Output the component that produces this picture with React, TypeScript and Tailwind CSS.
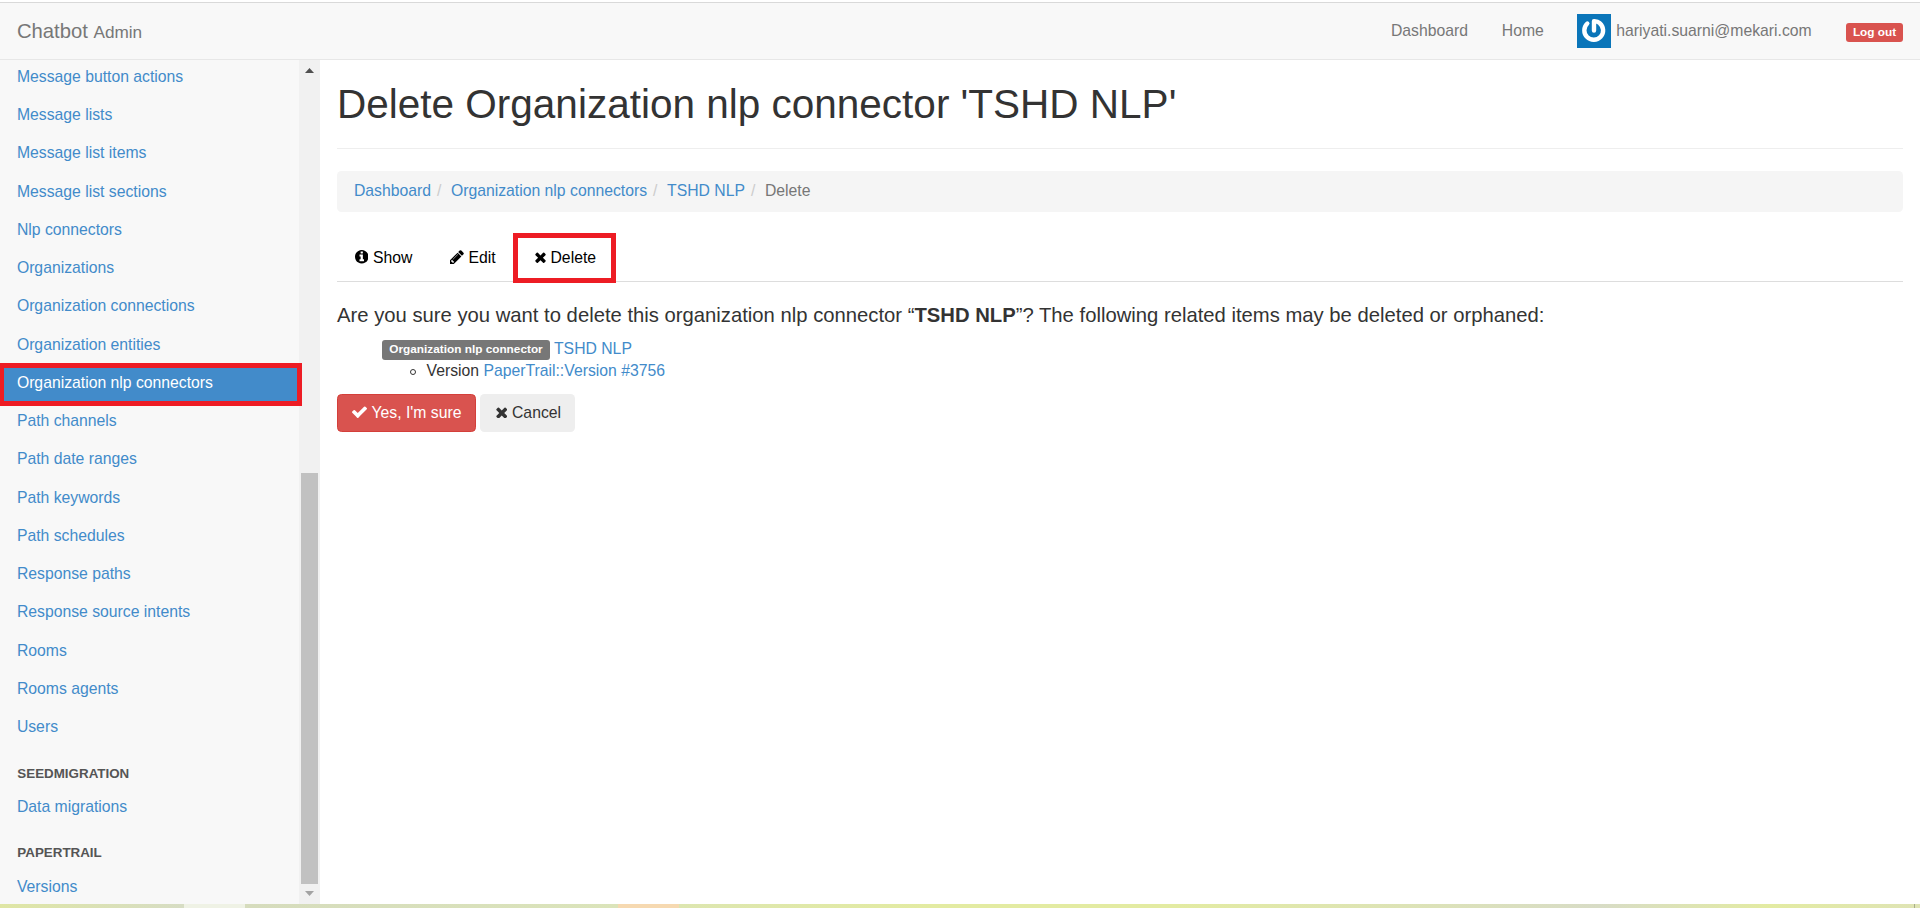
import React from 'react';

const models = [
  'Message button actions', 'Message lists', 'Message list items', 'Message list sections',
  'Nlp connectors', 'Organizations', 'Organization connections', 'Organization entities',
  'Organization nlp connectors', 'Path channels', 'Path date ranges', 'Path keywords',
  'Path schedules', 'Response paths', 'Response source intents', 'Rooms', 'Rooms agents', 'Users',
];

const TIMES =
  'M1490 1322q0 40-28 68l-136 136q-28 28-68 28t-68-28l-294-294-294 294q-28 28-68 28t-68-28l-136-136q-28-28-28-68t28-68l294-294-294-294q-28-28-28-68t28-68l136-136q28-28 68-28t68 28l294 294 294-294q28-28 68-28t68 28l136 136q28 28 28 68t-28 68l-294 294 294 294q28 28 28 68z';
const CHECK =
  'M1671 566q0 40-28 68l-724 724-136 136q-28 28-68 28t-68-28l-136-136-362-362q-28-28-28-68t28-68l136-136q28-28 68-28t68 28l294 295 656-657q28-28 68-28t68 28l136 136q28 28 28 68z';
const INFO =
  'M1152 1376v-160q0-14-9-23t-23-9h-96v-512q0-14-9-23t-23-9h-320q-14 0-23 9t-9 23v160q0 14 9 23t23 9h96v320h-96q-14 0-23 9t-9 23v160q0 14 9 23t23 9h448q14 0 23-9t9-23zm-128-896v-160q0-14-9-23t-23-9h-192q-14 0-23 9t-9 23v160q0 14 9 23t23 9h192q14 0 23-9t9-23zm640 416q0 209-103 385.500t-279.500 279.500-385.500 103-385.500-103-279.500-279.500-103-385.500 103-385.500 279.500-279.500 385.500-103 385.500 103 279.500 279.500 103 385.500z';
const PENCIL =
  'M491 1536l91-91-235-235-91 91v107h128v128h107zm523-928q0-22-22-22-10 0-17 7l-542 542q-7 7-7 17 0 22 22 22 10 0 17-7l542-542q7-7 7-17zm-54-192l416 416-832 832h-416v-416zm683 96q0 53-37 90l-166 166-416-416 166-165q36-38 90-38 53 0 91 38l235 234q37 39 37 91z';

function Icon({ d, box, className }: { d: string; box: string; className: string }) {
  return (
    <svg viewBox={box} className={className} fill="currentColor">
      <path d={d} />
    </svg>
  );
}

function SideLink({ label, active }: { label: string; active?: boolean }) {
  return (
    <li
      className={
        active
          ? 'relative h-[38.25px] w-[299px] bg-[#428bca] py-[7.875px] pl-[16.875px] text-white'
          : 'h-[38.25px] py-[7.875px] pl-[16.875px] text-[#428bca]'
      }
    >
      {label}
      {active && <span className="absolute -top-[1px] left-0 h-[43px] w-[302px] border-[5px] border-l-4 border-[#ed1c24]" />}
    </li>
  );
}

function SideHeader({ label }: { label: string }) {
  return <li className="h-[41.5px] pt-[17.2px] pl-[17.300px] text-[13.39px] leading-5 font-bold text-[#555]">{label}</li>;
}

function Sidebar() {
  return (
    <aside className="flex w-80 shrink-0 bg-[#f8f8f8]">
      <ul className="-mt-[2.050px] w-[299px] shrink-0">
        {models.map((m) => (
          <SideLink key={m} label={m} active={m === 'Organization nlp connectors'} />
        ))}
        <SideHeader label="SEEDMIGRATION" />
        <SideLink label="Data migrations" />
        <SideHeader label="PAPERTRAIL" />
        <SideLink label="Versions" />
      </ul>
      <div className="flex w-[21px] flex-col items-center bg-[#f1f1f1]">
        <svg viewBox="0 0 9 5" className="mt-2 h-[5px] w-[9px] shrink-0" fill="#505050"><path d="M0 5L4.500 0L9 5z" /></svg>
        <div className="mt-[400px] h-[411px] w-[17px] shrink-0 bg-[#c1c1c1]" />
        <svg viewBox="0 0 9 5" className="mt-[7px] h-[5px] w-[9px] shrink-0" fill="#a3a3a3"><path d="M0 0L4.500 5L9 0z" /></svg>
      </div>
    </aside>
  );
}

function Navbar() {
  return (
    <header className="mt-[2px] flex h-[58px] shrink-0 border-y border-t-[#d9d9d9] border-b-[#e7e7e7] bg-[#f8f8f8] text-[#777]">
      <div className="pt-[17px] pl-[16.875px] text-[20.25px] leading-[22px]">
        Chatbot <span className="text-[17.2px]">Admin</span>
      </div>
      <nav className="ml-auto flex items-start pr-[17px]">
        <a className="mt-[17px] mr-[33.750px]">Dashboard</a>
        <a className="mt-[17px] mr-[33px]">Home</a>
        <svg viewBox="0 0 34 34" className="mt-[11px] mr-[5.500px] h-[34px] w-[34px]">
          <rect width="34" height="34" fill="#0a75b9" />
          <path d="M10.300 9.500A9.400 9.400 0 1 0 22.800 9.200Q20.500 7 17 7.200V16.500" fill="none" stroke="#fff" strokeWidth="4.400" strokeLinecap="round" strokeLinejoin="round" />
        </svg>
        <a className="mt-[17px] mr-[34.300px]">hariyati.suarni@mekari.com</a>
        <span className="mt-5 flex h-[19px] w-[57px] items-center justify-center rounded-[3px] bg-[#d9534f] pb-px text-[11.810px] font-bold text-white">Log out</span>
      </nav>
    </header>
  );
}

function Slash() {
  return <span className="w-5 pl-[6px] text-[#ccc]">/</span>;
}

function Main() {
  return (
    <main className="flex min-w-0 flex-1 flex-col bg-white pr-[17px] pl-[17px] text-[#333]">
      <h1 className="mt-[21.700px] text-[40.500px] leading-[44.550px] font-normal">Delete Organization nlp connector 'TSHD NLP'</h1>
      <div className="mt-[21.750px] h-px shrink-0 bg-[#eee]" />
      <div className="mt-[22px] flex h-[41px] shrink-0 rounded-[4.500px] bg-[#f5f5f5] pt-[9px] pl-[16.875px] text-[#428bca]">
        <a>Dashboard</a>
        <Slash />
        <a>Organization nlp connectors</a>
        <Slash />
        <a>TSHD NLP</a>
        <Slash />
        <span className="text-[#777]">Delete</span>
      </div>
      <div className="mt-[21px] flex h-[49px] shrink-0 border-b border-[#ddd] text-black">
        <div className="flex h-[49px] w-[95px] pt-[14px] pl-[17.500px]">
          <Icon d={INFO} box="128 128 1536 1536" className="mt-[3.500px] mr-[5px] h-[13.500px] w-[13.500px]" />
          Show
        </div>
        <div className="flex h-[49px] w-[81px] pt-[14px] pl-[18px]">
          <Icon d={PENCIL} box="128 128 1536 1536" className="mt-[3.500px] mr-[4.500px] h-[14px] w-[14px]" />
          Edit
        </div>
        <div className="flex h-[50px] w-[103px] shrink-0 border-[5px] border-[#ed1c24] pt-[9px] pl-[16.500px]">
          <Icon d={TIMES} box="302 302 1188 1252" className="mt-[5px] mr-[5px] h-[11px] w-[11px]" />
          Delete
        </div>
      </div>
      <h4 className="mt-[21.500px] text-[20.250px] leading-[24px]">
        Are you sure you want to delete this organization nlp connector “<b>TSHD NLP</b>”? The following related items may be deleted or orphaned:
      </h4>
      <div className="mt-[10.500px] flex h-[22px] pl-[45px]">
        <span className="mt-[2px] mr-[4px] flex h-5 w-[168px] items-center justify-center rounded-[3px] bg-[#777] pb-[2px] text-[11.810px] font-bold text-white">Organization nlp connector</span>
        <a className="text-[#428bca]">TSHD NLP</a>
      </div>
      <div className="flex h-[22px] pl-[73px]">
        <span className="mt-[9px] mr-[10.500px] h-[6px] w-[6px] rounded-full border border-[#333]" />
        Version&nbsp;<a className="text-[#428bca]">PaperTrail::Version #3756</a>
      </div>
      <div className="mt-[12px] flex">
        <button className="mr-1 flex h-[38px] w-[139px] rounded-[4.500px] border border-[#d43f3a] bg-[#d9534f] pt-[7px] pl-[14px] text-white">
          <Icon d={CHECK} box="121 298 1550 1224" className="mt-[4.500px] mr-[4.500px] h-[12px] w-[15px]" />
          Yes, I'm sure
        </button>
        <button className="flex h-[38px] w-[95px] rounded-[4.500px] bg-[#eee] pt-[8px] pl-[15.500px]">
          <Icon d={TIMES} box="302 302 1188 1252" className="mt-[5px] mr-[5px] h-[11.500px] w-[11.500px]" />
          Cancel
        </button>
      </div>
    </main>
  );
}

export default function App() {
  return (
    <div className="flex h-[908px] w-[1920px] flex-col overflow-hidden bg-white font-['Liberation_Sans',Arial,sans-serif] text-[15.750px] leading-[22.500px] whitespace-nowrap">
      <Navbar />
      <div className="flex h-[844px] shrink-0 overflow-hidden">
        <Sidebar />
        <Main />
      </div>
      <div className="flex h-1 shrink-0">
        <div className="w-[184px] bg-linear-to-r from-[#dfe6a4] to-[#d7ddc4]" />
        <div className="w-[61px] bg-[#eff2e5]" />
        <div className="w-[373px] bg-linear-to-r from-[#d6dcbd] to-[#dbe4ba]" />
        <div className="w-[61px] bg-[#f6d9b1]" />
        <div className="w-[500px] bg-linear-to-r from-[#dde6b0] via-[#e3eba2] to-[#e3eba2]" />
        <div className="w-[420px] bg-linear-to-r from-[#e3eba2] to-[#d8dcc6]" />
        <div className="w-[170px] bg-linear-to-r from-[#d8dcc6] to-[#e3eba2]" />
        <div className="w-[145px] bg-linear-to-r from-[#e3eba2] to-[#dfe4b4]" />
        <div className="w-px bg-[#a8ad8d]" />
        <div className="flex-1 bg-[#dfe4b4]" />
      </div>
    </div>
  );
}
